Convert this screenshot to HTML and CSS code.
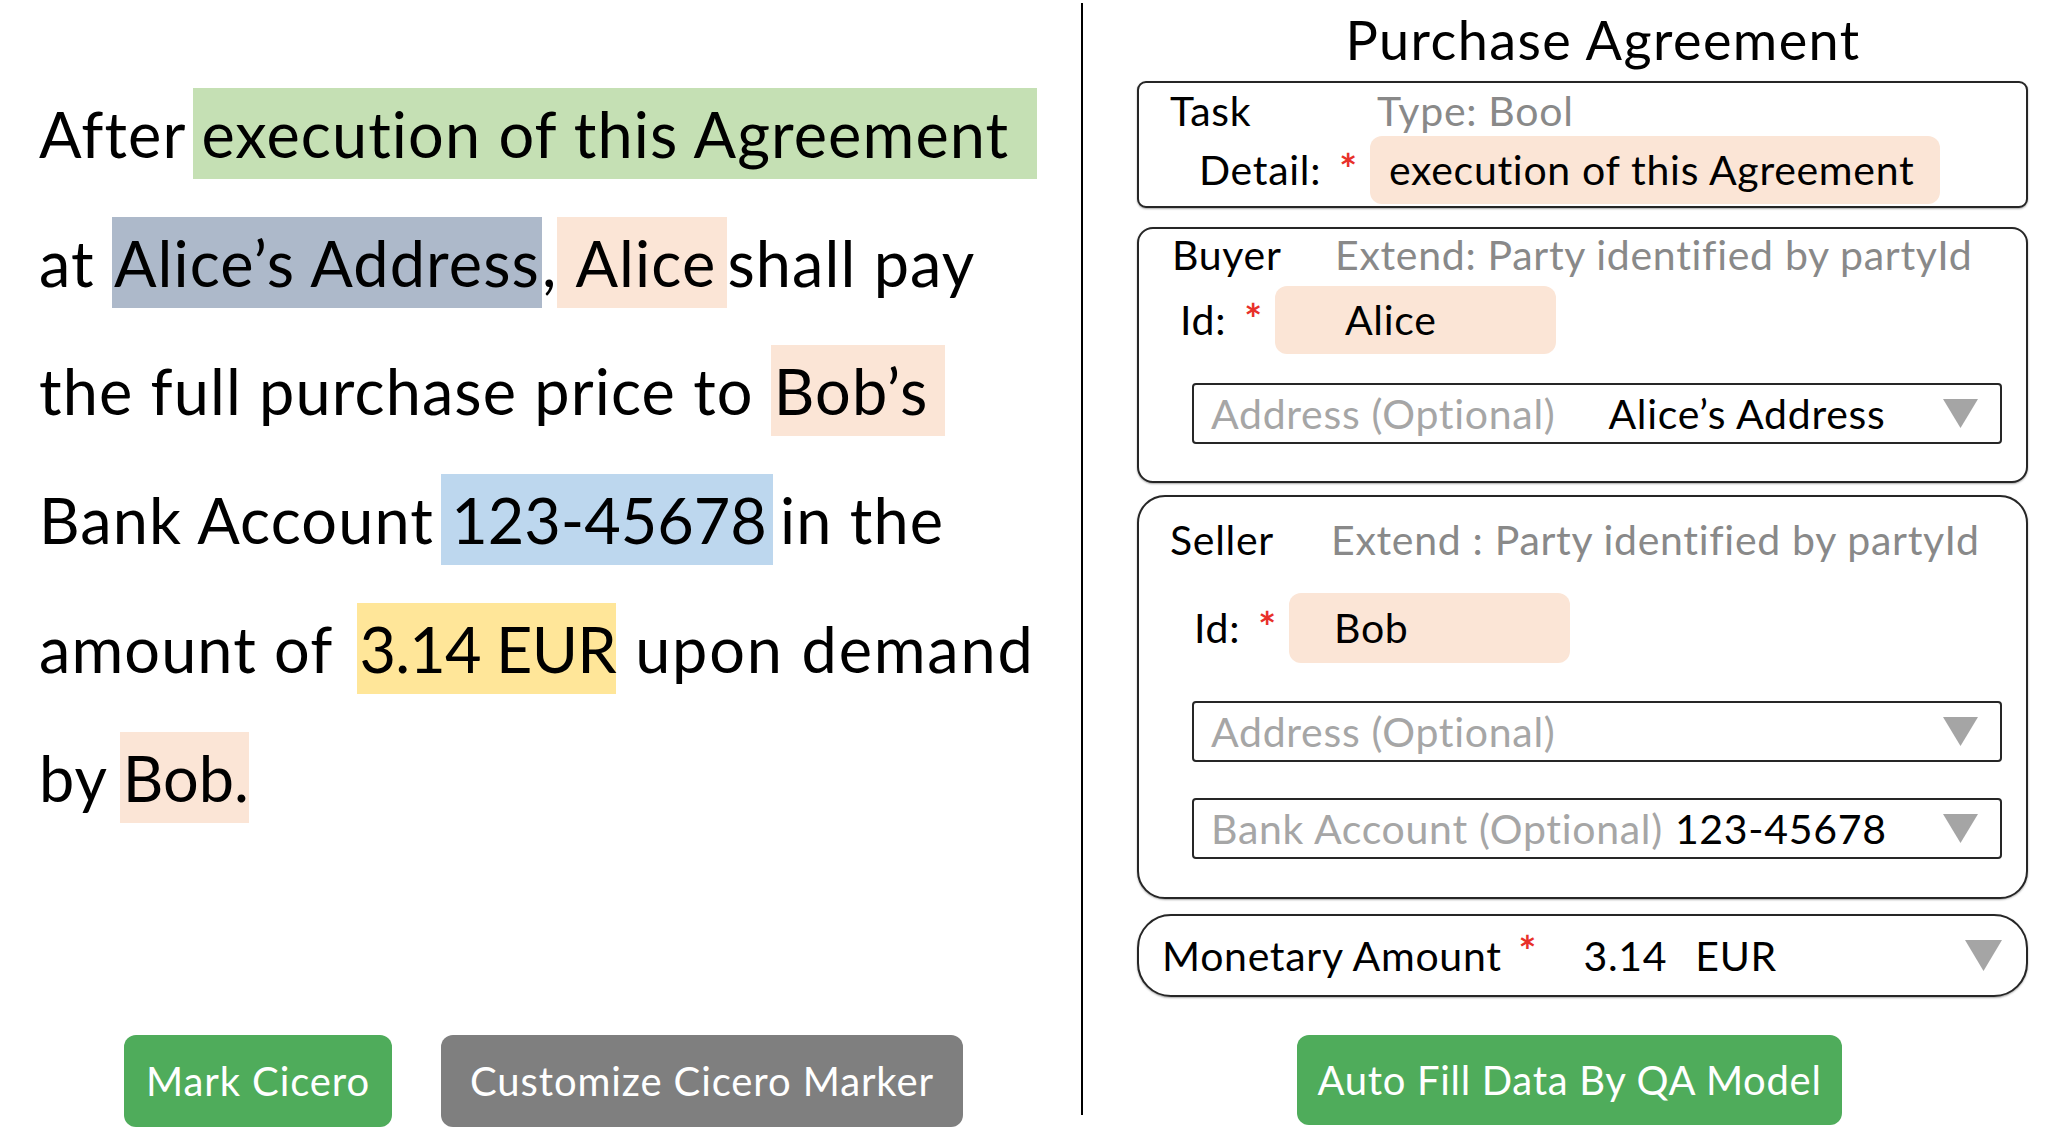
FILE: index.html
```html
<!DOCTYPE html>
<html lang="en">
<head>
<meta charset="utf-8">
<title>Purchase Agreement</title>
<link rel="stylesheet" href="styles.css">
</head>
<body>
<div class="page">
  <section class="left">
    <p class="contract">After <span class="hl hl-green">execution of this Agreement </span><br>at <span class="hl hl-slate">Alice’s Address</span>,<span class="hl hl-peach hl-alice"> Alice </span>shall pay<br>the full purchase price to <span class="hl hl-peach hl-bobs">Bob’s</span><br>Bank Account <span class="hl hl-blue">123-45678</span> in the<br>amount of <span class="hl hl-yellow">3.14 EUR</span> <span class="tail">upon demand</span><br>by <span class="hl hl-peach hl-bob">Bob.</span></p>
    <div class="actions">
      <button class="btn btn-green btn-mark">Mark Cicero</button>
      <button class="btn btn-gray btn-custom">Customize Cicero Marker</button>
    </div>
  </section>
  <div class="divider"></div>
  <section class="right">
    <h1 class="title">Purchase Agreement</h1>

    <div class="card card-task">
      <div class="head"><span class="head-label head-label-task">Task</span><span class="hint">Type: Bool</span></div>
      <div class="field-row">
        <span class="field-label field-label-task">Detail:<span class="req">*</span></span>
        <span class="field field-task">execution of this Agreement</span>
      </div>
    </div>

    <div class="card card-buyer">
      <div class="head"><span class="head-label head-label-buyer">Buyer</span><span class="hint">Extend: Party identified by partyId</span></div>
      <div class="field-row">
        <span class="field-label field-label-buyer">Id:<span class="req">*</span></span>
        <span class="field field-id field-alice">Alice</span>
      </div>
      <div class="select select-buyer-address">
        <span class="placeholder">Address (Optional)</span>
        <span class="value value-address">Alice’s Address</span>
        <svg class="caret" width="35" height="29" viewBox="0 0 35 29"><polygon points="0,0 35,0 17.5,29" fill="#a5a5a5"/></svg>
      </div>
    </div>

    <div class="card card-seller">
      <div class="head"><span class="head-label head-label-seller">Seller</span><span class="hint">Extend : Party identified by partyId</span></div>
      <div class="field-row field-row-seller">
        <span class="field-label field-label-seller">Id:<span class="req">*</span></span>
        <span class="field field-id field-bob">Bob</span>
      </div>
      <div class="select select-seller-address">
        <span class="placeholder">Address (Optional)</span>
        <svg class="caret" width="35" height="29" viewBox="0 0 35 29"><polygon points="0,0 35,0 17.5,29" fill="#a5a5a5"/></svg>
      </div>
      <div class="select select-bank">
        <span class="placeholder">Bank Account (Optional)</span>
        <span class="value value-bank">123-45678</span>
        <svg class="caret" width="35" height="29" viewBox="0 0 35 29"><polygon points="0,0 35,0 17.5,29" fill="#a5a5a5"/></svg>
      </div>
    </div>

    <div class="card card-money">
      <span class="money-label">Monetary Amount<span class="req">*</span></span>
      <span class="money-amount">3.14</span>
      <span class="money-currency">EUR</span>
      <svg class="caret" width="37" height="31" viewBox="0 0 37 31"><polygon points="0,0 37,0 18.5,31" fill="#a5a5a5"/></svg>
    </div>

    <button class="btn btn-green btn-autofill">Auto Fill Data By QA Model</button>
  </section>
</div>
</body>
</html>
```

FILE: styles.css
```css
* { box-sizing: border-box; margin: 0; padding: 0; }
html, body { width: 2054px; height: 1146px; background: #fff; overflow: hidden; }
body { font-family: Lato, "Open Sans", "Liberation Sans", sans-serif; color: #000; }

.page { display: flex; height: 1146px; }

/* ---------- left pane ---------- */
.left { flex: 0 0 1081px; display: flex; flex-direction: column; }
.contract {
  padding: 70px 0 0 39px;
  font-size: 63px;
  line-height: 128.7px;
  letter-spacing: 1.1px;
  white-space: nowrap;
}
.hl { padding: 8px 0 8px; }
.hl-green { background: #c5e0b4; margin-left: -9px; padding-left: 8px; padding-right: 28px; }
.hl-slate { background: #adb9ca; padding-left: 2px; padding-right: 2px; }
.hl-peach { background: #fbe5d6; }
.hl-alice { padding-left: 9px; padding-right: 0; word-spacing: -6px; }
.hl-bobs { padding-left: 3px; padding-right: 17px; }
.hl-blue { background: #bdd7ee; letter-spacing: 0; margin-left: -10px; margin-right: -10px; padding-left: 10px; padding-right: 6px; }
.hl-yellow { background: #ffe699; letter-spacing: -0.8px; margin-left: 8px; margin-right: 2px; padding-left: 2px; padding-right: 0; }
.tail { letter-spacing: 1.8px; }
.hl-bob { letter-spacing: 0; margin-left: -4px; padding-left: 3px; padding-right: 0; }

.actions { display: flex; gap: 49px; margin-top: 193px; padding-left: 124px; }

.btn {
  border: none;
  border-radius: 12px;
  color: #fff;
  font-family: Lato, "Open Sans", sans-serif;
  font-size: 40px;
  letter-spacing: 0.9px;
  height: 92px;
  display: flex;
  align-items: center;
  justify-content: center;
}
.btn-green { background: #4fac5b; }
.btn-gray { background: #7f7f7f; }
.btn-mark { width: 268px; }
.btn-custom { width: 522px; }

.divider { flex: 0 0 2px; margin-top: 3px; height: 1112px; background: #000; }

/* ---------- right pane ---------- */
.right { flex: 1; padding: 0 26px 0 54px; font-size: 41px; letter-spacing: 0.7px; }
.title {
  margin-top: 8px;
  padding-left: 41px;
  text-align: center;
  font-size: 54px;
  font-weight: 400;
  letter-spacing: 1.4px;
  line-height: 64.8px;
}

.card {
  border: 2px solid #262626;
  box-shadow: 0 1px 2px rgba(0, 0, 0, 0.35);
  background: #fff;
}
.card-task { margin-top: 8px; border-radius: 9px; padding: 4px 0 2px 31px; }
.card-buyer { margin-top: 19px; border-radius: 16px; padding: 2px 0 37px 33px; }
.card-seller { margin-top: 12px; border-radius: 28px; padding: 19px 0 38px 31px; }

.head { display: flex; height: 48px; line-height: 48px; white-space: nowrap; }
.head-label-task { width: 207px; }
.head-label-buyer { width: 163px; }
.head-label-seller { width: 161px; }
.hint { color: #898989; }

.field-row { display: flex; align-items: center; margin-top: 1px; white-space: nowrap; }
.card-buyer .field-row { margin-top: 7px; }
.field-row-seller { margin-top: 29px; }

.field-label { display: flex; justify-content: flex-end; align-items: flex-start; padding-right: 13px; }
.field-label-task { width: 200px; }
.field-label-buyer { width: 103px; }
.field-label-seller { width: 119px; }
.field-label-seller .req { margin-left: 20px; }

.req {
  color: #e8302a;
  font-size: 42px;
  font-weight: 700;
  line-height: 1;
  letter-spacing: 0;
}
.field-label .req { margin-left: 18px; margin-top: 3px; }

.field {
  display: flex;
  align-items: center;
  height: 68px;
  background: #fbe5d6;
  border-radius: 12px;
}
.field-task { width: 570px; padding-left: 19px; }
.field-id { width: 281px; }
.field-alice { padding-left: 70px; }
.field-bob { height: 70px; padding-left: 45px; }

.select {
  display: flex;
  align-items: center;
  height: 61px;
  margin-left: 20px;
  width: 810px;
  border: 2px solid #262626;
  border-radius: 4px;
  padding: 0 22px 0 17px;
  white-space: nowrap;
}
.select-buyer-address { margin-top: 29px; }
.select-seller-address { margin-top: 38px; margin-left: 22px; }
.select-bank { margin-top: 36px; margin-left: 22px; }
.placeholder { color: #a6a6a6; }
.value-address { margin-left: 53px; }
.value-bank { margin-left: 12px; }
.caret { margin-left: auto; flex: none; }

.card-money {
  margin-top: 15px;
  height: 83px;
  border-radius: 34px;
  display: flex;
  align-items: center;
  padding: 0 24px 0 23px;
  white-space: nowrap;
}
.money-label { display: flex; align-items: flex-start; }
.money-label .req { margin-left: 17px; margin-top: -1px; }
.money-amount { margin-left: 47px; }
.money-currency { margin-left: 28px; }

.btn-autofill { width: 545px; height: 90px; margin: 38px 0 0 160px; letter-spacing: 0.7px; }
```
